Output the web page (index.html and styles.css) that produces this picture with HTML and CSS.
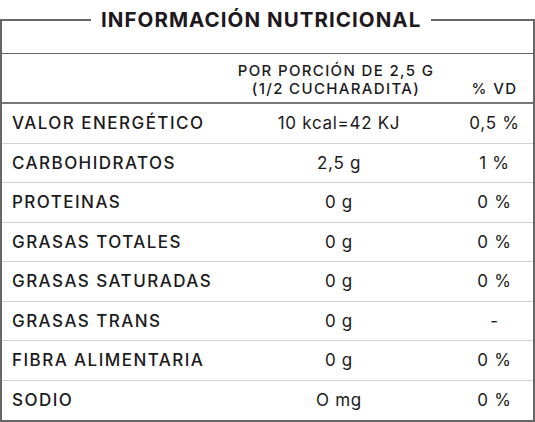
FILE: index.html
```html
<!DOCTYPE html>
<html lang="es">
<head>
<meta charset="utf-8">
<title>Información nutricional</title>
<link rel="stylesheet" href="styles.css">
</head>
<body>
<fieldset class="panel">
  <legend class="title">INFORMACIÓN NUTRICIONAL</legend>
  <div class="band"></div>
  <table class="facts">
    <colgroup>
      <col class="c-label">
      <col class="c-value">
      <col class="c-gap">
      <col class="c-vd">
    </colgroup>
    <thead>
      <tr>
        <th></th>
        <th class="mid head-mid">POR PORCIÓN DE 2,5 G<br>(1/2 CUCHARADITA)</th>
        <th></th>
        <th class="vd">% VD</th>
      </tr>
    </thead>
    <tbody>
      <tr><td class="label">VALOR ENERGÉTICO</td><td class="mid">10 kcal=42 KJ</td><td></td><td class="vd">0,5 %</td></tr>
      <tr><td class="label">CARBOHIDRATOS</td><td class="mid">2,5 g</td><td></td><td class="vd">1 %</td></tr>
      <tr><td class="label">PROTEINAS</td><td class="mid">0 g</td><td></td><td class="vd">0 %</td></tr>
      <tr><td class="label">GRASAS TOTALES</td><td class="mid">0 g</td><td></td><td class="vd">0 %</td></tr>
      <tr><td class="label">GRASAS SATURADAS</td><td class="mid">0 g</td><td></td><td class="vd">0 %</td></tr>
      <tr><td class="label">GRASAS TRANS</td><td class="mid">0 g</td><td></td><td class="vd">-</td></tr>
      <tr><td class="label">FIBRA ALIMENTARIA</td><td class="mid">0 g</td><td></td><td class="vd">0 %</td></tr>
      <tr><td class="label">SODIO</td><td class="mid">O mg</td><td></td><td class="vd">0 %</td></tr>
    </tbody>
  </table>
</fieldset>
</body>
</html>
```
FILE: styles.css
```css
html, body {
  margin: 0;
  padding: 0;
  background: #ffffff;
}
body {
  font-family: Inter, "Open Sans", "Liberation Sans", sans-serif;
  color: #1b1a1c;
}
.panel {
  margin: 0;
  padding: 0;
  min-width: 0;
  border: 2px solid #666666;
  width: 535px;
  box-sizing: border-box;
  height: 422px;
  overflow: hidden;
}
.title {
  margin-left: 89px;
  padding: 0 10px;
  font-size: 20.5px;
  font-weight: 700;
  line-height: 40px;
  color: #1e1820;
  letter-spacing: 1.05px;
}
.band {
  height: 14px;
  box-sizing: border-box;
  border-bottom: 1px solid #666666;
}
.facts {
  width: 100%;
  border-collapse: separate;
  border-spacing: 0;
  table-layout: fixed;
}
.c-label { width: 235px; }
.c-value { width: 204px; }
.c-gap { width: 15px; }
.c-vd { width: 77px; }
.facts th {
  height: 50px;
  box-sizing: border-box;
  padding: 0 0 4px;
  vertical-align: bottom;
  font-size: 15px;
  line-height: 18px;
  font-weight: 500;
  letter-spacing: 1.35px;
  border-bottom: 2px solid #777777;
}
.facts th.head-mid {
  padding-right: 6px;
}
.facts td {
  height: 39.5px;
  box-sizing: border-box;
  padding: 0;
  font-size: 17px;
  border-bottom: 1px solid #d2d2d2;
}
.facts tbody tr:last-child td {
  border-bottom: none;
}
.label {
  padding-left: 10px !important;
  font-weight: 500;
  letter-spacing: 1.45px;
}
.mid, .vd {
  text-align: center;
  font-weight: 400;
  letter-spacing: 0.7px;
}
```
